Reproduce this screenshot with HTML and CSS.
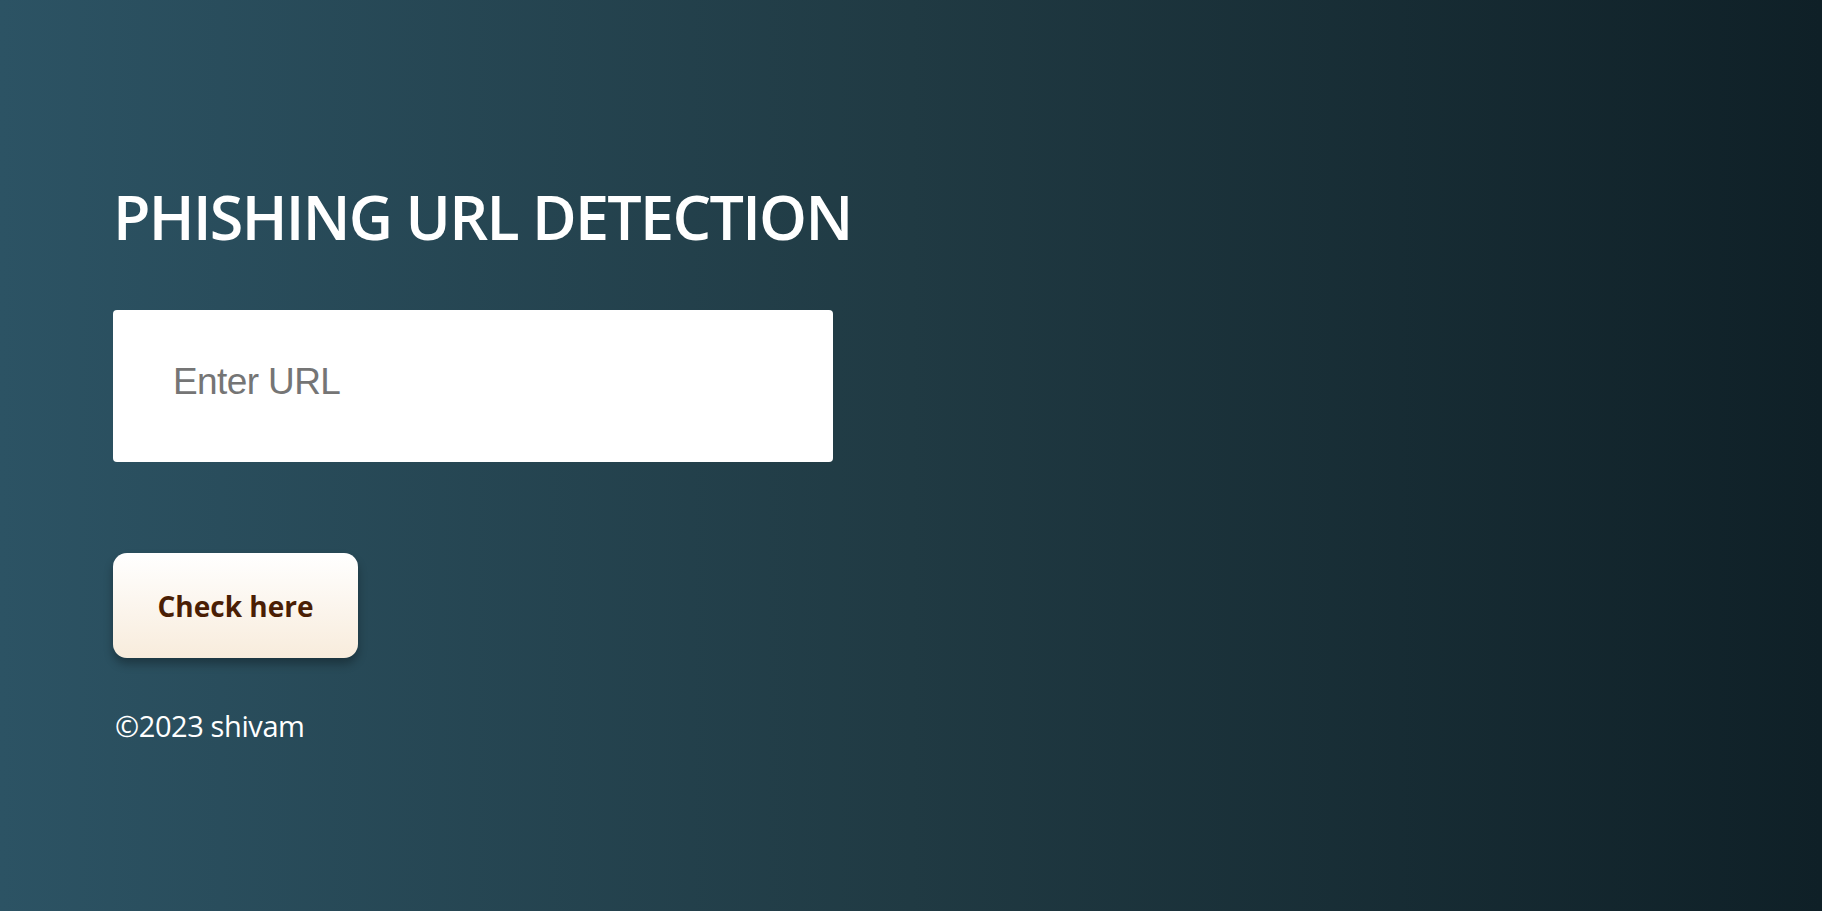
FILE: index.html
```html
<!DOCTYPE html>
<html lang="en">
<head>
<meta charset="utf-8">
<title>Phishing URL Detection</title>
<link rel="stylesheet" href="styles.css">
</head>
<body>
<main class="page">
  <h1 class="title">PHISHING URL DETECTION</h1>
  <form class="form">
    <input class="url-input" type="text" placeholder="Enter URL">
    <button class="check-btn" type="button">Check here</button>
  </form>
  <p class="footer">©2023 shivam</p>
</main>
</body>
</html>
```

FILE: styles.css
```css
html, body {
  margin: 0;
  padding: 0;
  height: 100%;
}
body {
  background: linear-gradient(to right, #2c5364, #203a43, #0f2027);
  font-family: "Open Sans", "Noto Sans", sans-serif;
  color: #fff;
}
.page {
  padding: 170px 0 0 113px;
  display: flex;
  flex-direction: column;
  align-items: flex-start;
}
.title {
  margin: 0;
  font-size: 61px;
  font-weight: 600;
  line-height: 94px;
  letter-spacing: -1.7px;
  color: #fff;
}
.form {
  display: flex;
  flex-direction: column;
  align-items: flex-start;
  margin-top: 46px;
}
.url-input {
  box-sizing: border-box;
  width: 720px;
  height: 152px;
  border: none;
  border-radius: 4px;
  padding: 0 60px 8px;
  font-family: "Liberation Sans", Arial, sans-serif;
  font-size: 37px;
  letter-spacing: -0.6px;
  color: #333;
  background: #fff;
  outline: none;
}
.url-input::placeholder {
  color: #757575;
}
.check-btn {
  margin-top: 91px;
  width: 245px;
  height: 105px;
  border: none;
  border-radius: 14px;
  background: linear-gradient(to bottom, #ffffff, #f8ecdc);
  box-shadow: 0 6px 10px rgba(0, 0, 0, 0.3);
  font-family: "Open Sans", "Noto Sans", sans-serif;
  font-weight: 700;
  font-size: 28px;
  color: #4a1e04;
  cursor: pointer;
}
.footer {
  margin: 48px 0 0 2px;
  font-size: 29px;
  line-height: 40px;
  letter-spacing: -0.4px;
  color: #fff;
}
```
